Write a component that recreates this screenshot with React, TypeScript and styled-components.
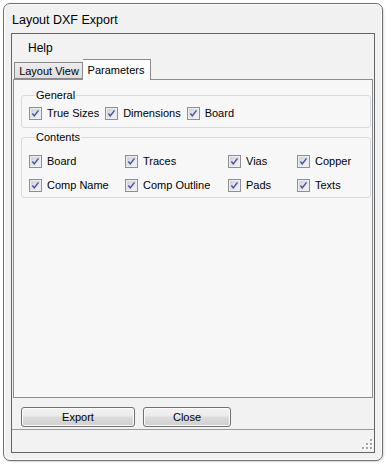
import React from "react";
import styled, { createGlobalStyle } from "styled-components";

const GlobalStyle = createGlobalStyle`
  html, body { margin: 0; padding: 0; background: #ffffff; }
  body { font-family: "Liberation Sans", Arial, sans-serif; color: #000; }
  * { box-sizing: border-box; }
`;

const Page = styled.div`
  width: 386px;
  height: 465px;
  padding: 3px 3px 4px 3px;
  background: #ffffff;
`;

const Window = styled.div`
  width: 380px;
  height: 458px;
  border: 1px solid #6f6f6f;
  border-radius: 7px;
  background: #f1f1f2;
  box-shadow: inset 0 0 0 1px #ffffff, 1px 1px 2px rgba(0, 0, 0, 0.15);
  display: flex;
  flex-direction: column;
  padding: 0 7px 7px 7px;
`;

const TitleBar = styled.div`
  height: 29px;
  display: flex;
  align-items: center;
  padding: 2px 0 0 1px;
  font-size: 12.5px;
  color: #000;
`;

const Frame = styled.div`
  flex: 1;
  border: 1px solid #646464;
  display: flex;
  flex-direction: column;
  background: #f2f2f3;
`;

const MenuBar = styled.div`
  height: 25px;
  display: flex;
  align-items: center;
  padding: 3px 0 0 16px;
`;

const MenuItem = styled.span`
  font-size: 12px;
`;

const TabStrip = styled.div`
  height: 20px;
  display: flex;
  align-items: flex-end;
  padding-left: 2px;
  position: relative;
  z-index: 1;
`;

const Tab = styled.div<{ $active?: boolean }>`
  height: ${(p) => (p.$active ? "21px" : "17px")};
  margin-bottom: ${(p) => (p.$active ? "-1px" : "0")};
  width: ${(p) => (p.$active ? "68px" : "69px")};
  border: 1px solid #8a8a8a;
  border-bottom: ${(p) => (p.$active ? "none" : "1px solid #8a8a8a")};
  border-left: ${(p) => (p.$active ? "none" : "1px solid #8a8a8a")};
  background: ${(p) =>
    p.$active ? "#fcfcfc" : "linear-gradient(#ececec, #dedede)"};
  font-size: 11px;
  display: flex;
  align-items: center;
  justify-content: center;
  padding: ${(p) => (p.$active ? "0 1px 1px 0" : "1px 0 0 1px")};
  white-space: nowrap;
`;

const TabPanel = styled.div`
  height: 319px;
  margin: 0 1px;
  border: 1px solid #8c8e94;
  background: #f7f7f8;
  padding: 0 1px 0 7px;
  display: flex;
  flex-direction: column;
`;

const GroupBox = styled.fieldset<{ $top: number; $pad: string }>`
  margin: ${(p) => p.$top}px 0 0 0;
  padding: ${(p) => p.$pad};
  border: 1px solid #d3dce3;
  border-radius: 3px;
  min-width: 0;
`;

const Legend = styled.legend`
  font-size: 11px;
  line-height: 13px;
  padding: 0 1px;
  margin-left: 6px;
`;

const FlowRow = styled.div`
  display: flex;
  align-items: center;
  gap: 6px;
`;

const CheckGrid = styled.div`
  display: grid;
  grid-template-columns: 96px 103px 69px auto;
  row-gap: 11px;
`;

const CheckItem = styled.label`
  display: flex;
  align-items: center;
  gap: 5px;
  height: 13px;
  font-size: 11px;
  line-height: 13px;
  white-space: nowrap;
`;

const BoxSvg = styled.svg`
  width: 13px;
  height: 13px;
  flex: none;
  display: block;
`;

const CheckBox = () => (
  <BoxSvg viewBox="0 0 13 13">
    <defs>
      <linearGradient id="cbfill" x1="0" y1="0" x2="1" y2="1">
        <stop offset="0" stopColor="#cdd1d8" />
        <stop offset="1" stopColor="#f7f7f8" />
      </linearGradient>
    </defs>
    <rect x="0.5" y="0.5" width="12" height="12" fill="#f4f4f4" stroke="#8e8f8f" />
    <rect x="2" y="2" width="9" height="9" fill="url(#cbfill)" stroke="#d8dbe0" strokeWidth="0.5" />
    <path d="M3.4 6.5 L5.3 8.9 L9.5 3.3" fill="none" stroke="#44509a" strokeWidth="1.4" />
  </BoxSvg>
);

const Check = ({ label }: { label: string }) => (
  <CheckItem>
    <CheckBox />
    <span>{label}</span>
  </CheckItem>
);

const ButtonRow = styled.div`
  display: flex;
  gap: 8px;
  padding: 9px 0 2px 9px;
`;

const Button = styled.button<{ $w: number }>`
  width: ${(p) => p.$w}px;
  height: 20px;
  border: 1px solid #707070;
  border-radius: 3px;
  background: linear-gradient(#f2f2f2 0%, #ebebeb 45%, #dddddd 50%, #cfcfcf 100%);
  box-shadow: inset 0 0 0 1px #fbfbfb;
  font-family: "Liberation Sans", Arial, sans-serif;
  font-size: 11px;
  color: #000;
  padding: 0;
`;

const StatusBar = styled.div`
  flex: 1;
  border-top: 1px solid #9a9a9a;
  display: flex;
  justify-content: flex-end;
  align-items: flex-end;
  padding: 0 1px 2px 0;
`;

const Grip = () => (
  <svg width="11" height="11" viewBox="0 0 11 11">
    {[
      [8, 0],
      [4, 4],
      [8, 4],
      [0, 8],
      [4, 8],
      [8, 8],
    ].map(([x, y], i) => (
      <g key={i}>
        <rect x={x + 1} y={y + 1} width="2" height="2" fill="#ffffff" />
        <rect x={x} y={y} width="2" height="2" fill="#a5a5a5" />
      </g>
    ))}
  </svg>
);

export default function App() {
  return (
    <>
      <GlobalStyle />
      <Page>
        <Window>
          <TitleBar>Layout DXF Export</TitleBar>
          <Frame>
            <MenuBar>
              <MenuItem>Help</MenuItem>
            </MenuBar>
            <TabStrip>
              <Tab>Layout View</Tab>
              <Tab $active>Parameters</Tab>
            </TabStrip>
            <TabPanel>
              <GroupBox $top={9} $pad="5px 6px 7px 7px">
                <Legend>General</Legend>
                <FlowRow>
                  <Check label="True Sizes" />
                  <Check label="Dimensions" />
                  <Check label="Board" />
                </FlowRow>
              </GroupBox>
              <GroupBox $top={3} $pad="11px 6px 5px 7px">
                <Legend>Contents</Legend>
                <CheckGrid>
                  <Check label="Board" />
                  <Check label="Traces" />
                  <Check label="Vias" />
                  <Check label="Copper" />
                  <Check label="Comp Name" />
                  <Check label="Comp Outline" />
                  <Check label="Pads" />
                  <Check label="Texts" />
                </CheckGrid>
              </GroupBox>
            </TabPanel>
            <ButtonRow>
              <Button $w={114}>Export</Button>
              <Button $w={88}>Close</Button>
            </ButtonRow>
            <StatusBar>
              <Grip />
            </StatusBar>
          </Frame>
        </Window>
      </Page>
    </>
  );
}
